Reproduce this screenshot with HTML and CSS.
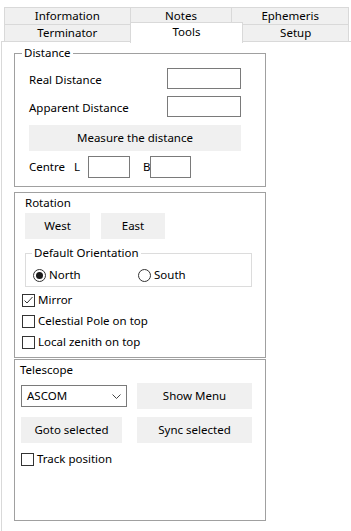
FILE: index.html
```html
<!DOCTYPE html>
<html lang="en">
<head>
    <meta charset="UTF-8">
    <meta name="viewport" content="width=device-width, initial-scale=1.0">
    <title>Tools</title>
    <link rel="stylesheet" href="styles.css">
</head>
<body>
    <div class="tabs">
        <div class="tab-row">
            <div class="tab tab-info">Information</div>
            <div class="tab tab-notes">Notes</div>
            <div class="tab tab-ephem">Ephemeris</div>
        </div>
        <div class="tab-row">
            <div class="tab tab-term">Terminator</div>
            <div class="tab tab-tools active">Tools</div>
            <div class="tab tab-setup">Setup</div>
        </div>
    </div>

    <div class="panel">
        <!-- Distance -->
        <fieldset class="group distance">
            <legend>Distance</legend>
            <div class="group-body">
                <div class="field-row">
                    <label class="field-label">Real Distance</label>
                    <input type="text" class="edit edit-wide">
                </div>
                <div class="field-row second">
                    <label class="field-label">Apparent Distance</label>
                    <input type="text" class="edit edit-wide">
                </div>
                <button class="btn btn-measure">Measure the distance</button>
                <div class="centre-row">
                    <span class="centre-label">Centre</span>
                    <span class="coord-label">L</span>
                    <input type="text" class="edit edit-l">
                    <span class="coord-label coord-b">B</span>
                    <input type="text" class="edit edit-b">
                </div>
            </div>
        </fieldset>

        <!-- Rotation -->
        <div class="box rotation">
            <div class="box-title">Rotation</div>
            <div class="btn-row">
                <button class="btn btn-west">West</button>
                <button class="btn btn-east">East</button>
            </div>
            <fieldset class="group orientation">
                <legend>Default Orientation</legend>
                <div class="radio-row">
                    <span class="radio"><span class="radio-dot checked"></span>North</span>
                    <span class="radio"><span class="radio-dot"></span>South</span>
                </div>
            </fieldset>
            <div class="check first">
                <span class="check-box">
                    <svg width="11" height="11" viewBox="0 0 11 11"><polyline points="1.5,5.5 4,8 9.5,2" fill="none" stroke="#333" stroke-width="1"/></svg>
                </span>Mirror
            </div>
            <div class="check"><span class="check-box"></span>Celestial Pole on top</div>
            <div class="check"><span class="check-box"></span>Local zenith on top</div>
        </div>

        <!-- Telescope -->
        <div class="box telescope">
            <div class="box-title">Telescope</div>
            <div class="tel-row">
                <div class="combo">
                    <span>ASCOM</span>
                    <svg width="9" height="5" viewBox="0 0 9 5"><polyline points="0.5,0.5 4.5,4.5 8.5,0.5" fill="none" stroke="#444" stroke-width="1"/></svg>
                </div>
                <button class="btn btn-menu">Show Menu</button>
            </div>
            <div class="tel-row second">
                <button class="btn btn-goto">Goto selected</button>
                <button class="btn btn-sync">Sync selected</button>
            </div>
            <div class="check track"><span class="check-box"></span>Track position</div>
        </div>
    </div>
</body>
</html>
```

FILE: styles.css
```css
* {
    box-sizing: border-box;
}

body {
    margin: 0;
    background: #fff;
    color: #000;
    font-family: 'Segoe UI', 'Noto Sans', sans-serif;
    font-size: 11.5px;
    line-height: 16px;
    overflow: hidden;
    height: 531px;
}

/* tabs */
.tabs {
    margin: 7px 0 0 4px;
    width: 345px;
}

.tab-row {
    display: flex;
    height: 18px;
}

.tab-row + .tab-row {
    margin-top: -1px;
}

.tab {
    height: 18px;
    border: 1px solid #d9d9d9;
    background: #f0f0f0;
    text-align: center;
    margin-left: -1px;
}

.tab:first-child {
    margin-left: 0;
}

.tab-info, .tab-term { width: 127px; }
.tab-notes { width: 103px; }
.tab-ephem { width: 118px; }
.tab-tools { width: 114px; }
.tab-setup { width: 107px; }

.tab.active {
    position: relative;
    z-index: 1;
    background: #fff;
    border-bottom: none;
    height: 21px;
    margin-top: -2px;
    padding-top: 1px;
}

/* panel */
.panel {
    margin: -1px 0 0 1px;
    width: 350px;
    height: 491px;
    border: 1px solid #d9d9d9;
    border-right: none;
    border-bottom: none;
    padding: 0 0 0 12px;
}

.group {
    margin: 0;
    padding: 0;
    min-width: 0;
}

.group legend {
    margin-left: 7px;
    padding: 0 2px;
    line-height: 16px;
}

.distance {
    margin-top: 3px;
    width: 252px;
    border: 1px solid #a0a0a0;
}

.group-body {
    padding: 7px 0 8px 14px;
}

.field-row {
    display: flex;
    align-items: center;
    height: 21px;
}

.field-row.second {
    margin-top: 7px;
}

.field-label {
    width: 138px;
    padding-top: 2px;
}

.edit {
    border: 1px solid #7a7a7a;
    background: #fff;
    height: 21px;
    padding: 0;
    font: inherit;
}

.edit-wide {
    width: 74px;
}

.btn {
    display: block;
    border: none;
    background: #f0f0f0;
    font: inherit;
    color: #000;
    height: 26px;
    padding: 0;
}

.btn-measure {
    margin-top: 8px;
    width: 212px;
}

.centre-row {
    display: flex;
    align-items: center;
    height: 22px;
    margin-top: 5px;
}

.centre-label {
    width: 45px;
}

.coord-label {
    width: 14px;
}

.coord-b {
    margin-left: 13px;
    width: 7px;
}

.edit-l {
    width: 42px;
    height: 22px;
}

.edit-b {
    width: 41px;
    height: 22px;
}

/* framed panels */
.box {
    width: 252px;
    border: 1px solid #a0a0a0;
}

.rotation {
    margin-top: 5px;
    padding: 2px 0 7px 10px;
}

.btn-row {
    display: flex;
    gap: 11px;
    margin-top: 2px;
}

.btn-west { width: 65px; }
.btn-east { width: 64px; }

.orientation {
    margin-top: 6px;
    width: 227px;
    border: 1px solid #dcdcdc;
}

.orientation legend {
    margin-left: 6px;
}

.radio-row {
    display: flex;
    padding: 6px 0 3px 7px;
}

.radio {
    display: flex;
    align-items: center;
    width: 105px;
    gap: 3px;
}

.radio-dot {
    width: 13px;
    height: 13px;
    border: 1px solid #333;
    border-radius: 50%;
    display: flex;
    align-items: center;
    justify-content: center;
}

.radio-dot.checked::after {
    content: "";
    width: 7px;
    height: 7px;
    border-radius: 50%;
    background: #1a1a1a;
}

.check {
    display: flex;
    align-items: center;
    gap: 3px;
    margin: 5px 0 0 -3px;
}

.check.first {
    margin-top: 5px;
}

.check-box {
    width: 13px;
    height: 13px;
    border: 1px solid #333;
    background: #fff;
    display: flex;
    align-items: center;
    justify-content: center;
}

.telescope {
    margin-top: 1px;
    height: 162px;
    padding: 2px 0 0 5px;
}

.tel-row {
    display: flex;
    align-items: center;
    margin: 5px 0 0 1px;
}

.tel-row.second {
    margin-top: 8px;
}

.combo {
    display: flex;
    align-items: center;
    justify-content: space-between;
    width: 106px;
    height: 22px;
    border: 1px solid #7a7a7a;
    padding: 0 5px 0 5px;
}

.btn-menu {
    margin-left: 10px;
    width: 115px;
}

.btn-goto { width: 101px; }

.btn-sync {
    margin-left: 15px;
    width: 115px;
}

.check.track {
    margin: 8px 0 0 1px;
}
```
